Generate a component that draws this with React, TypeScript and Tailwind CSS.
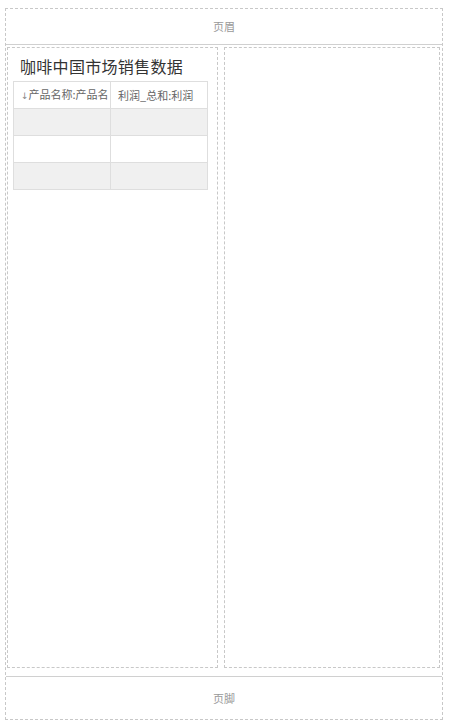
import React from "react";

const rows = [
  { name: "", profit: "", shade: true },
  { name: "", profit: "", shade: false },
  { name: "", profit: "", shade: true },
];

export default function App() {
  return (
    <div
      className="w-[451px] h-[727px] bg-white pt-[8px] pl-[5px] pr-[8px] pb-[7px]"
      style={{ fontFamily: '"Noto Sans CJK SC", "Noto Sans", sans-serif' }}
    >
      <div className="h-full border border-dashed border-[#c8c8c8] flex flex-col">
        {/* Header */}
        <div className="h-[36px] shrink-0 border-b border-[#d0d0d0] flex items-center justify-center text-[11px] text-[#999]">
          页眉
        </div>

        {/* Body */}
        <div className="flex-1 flex pt-[2px] pb-[8px] pl-[1px] pr-[2px] gap-[6px]">
          <div className="w-[211px] border border-dashed border-[#c8c8c8] flex flex-col">
            <h1 className="pt-[6px] pl-[12px] text-[16px] leading-[24px] text-[#333] font-normal tracking-[0.3px]">
              咖啡中国市场销售数据
            </h1>
            <table className="mt-[3px] ml-[5px] w-[195px] border-collapse text-[11px] text-[#666]">
              <thead>
                <tr className="h-[27px] bg-white">
                  <th className="border border-[#dedede] w-[97px] pl-[7px] text-left font-normal whitespace-nowrap">
                    <span className="text-[9px] text-[#888] font-['DejaVu_Sans',sans-serif]">↓</span>产品名称:产品名
                  </th>
                  <th className="border border-[#dedede] pl-[7px] text-left font-normal whitespace-nowrap">
                    利润_总和:利润
                  </th>
                </tr>
              </thead>
              <tbody>
                {rows.map((r, i) => (
                  <tr key={i} className={`h-[27px] ${r.shade ? "bg-[#f0f0f0]" : "bg-white"}`}>
                    <td className="border border-[#dedede]">{r.name}</td>
                    <td className="border border-[#dedede]">{r.profit}</td>
                  </tr>
                ))}
              </tbody>
            </table>
          </div>
          <div className="flex-1 border border-dashed border-[#c8c8c8]" />
        </div>

        {/* Footer */}
        <div className="h-[43px] shrink-0 border-t border-[#d0d0d0] flex items-center justify-center text-[11px] text-[#999]">
          页脚
        </div>
      </div>
    </div>
  );
}
